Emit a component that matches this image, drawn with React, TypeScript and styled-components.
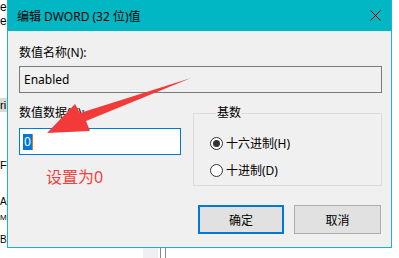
import React from "react"
import styled, { createGlobalStyle } from "styled-components"

const GlobalStyle = createGlobalStyle`
  html, body {
    margin: 0;
    padding: 0;
    background: #ffffff;
  }
  body {
    font-family: "Noto Sans", "Noto Sans CJK SC", sans-serif;
    font-size: 12px;
    color: #000;
  }
`

const Desktop = styled.div`
  position: relative;
  width: 399px;
  height: 258px;
  overflow: hidden;
  background: #ffffff;
`

const BackList = styled.div`
  display: flex;
  flex-direction: column;
  width: 7px;
  overflow: hidden;
  font-family: "Liberation Sans", sans-serif;
`

const BackRow = styled.div<{ $top: number; $size: number; $selected?: boolean }>`
  height: 14px;
  line-height: 14px;
  margin-top: ${({ $top }) => $top}px;
  font-size: ${({ $size }) => $size}px;
  white-space: nowrap;
  background: ${({ $selected }) => ($selected ? "#d9d9d9" : "transparent")};
`

const BottomStrip = styled.div`
  position: absolute;
  left: 143px;
  top: 248px;
  display: flex;
  height: 10px;
`

const StripBox = styled.div<{ $w: number; $bg: string }>`
  width: ${({ $w }) => $w}px;
  background: ${({ $bg }) => $bg};
`

const Window = styled.div`
  position: absolute;
  left: 7px;
  top: 0;
  width: 385px;
  height: 248px;
  box-sizing: border-box;
  border: 1px solid #1db4c2;
  border-top: none;
  background: #f0f0f0;
  display: flex;
  flex-direction: column;
`

const TitleBar = styled.div`
  height: 31px;
  flex-shrink: 0;
  background: #00b7c3;
  display: flex;
  align-items: center;
  justify-content: space-between;
  padding: 0 10px 0 9px;
  font-size: 12px;
  color: #000;
`

const Body = styled.div`
  flex: 1;
  padding: 14px 9px 0 11px;
  display: flex;
  flex-direction: column;
`

const Label = styled.div`
  height: 16px;
  line-height: 16px;
  font-size: 12px;
`

const ReadOnlyField = styled.div`
  margin-top: 5px;
  height: 27px;
  box-sizing: border-box;
  border: 1px solid #7a7a7a;
  background: #f0f0f0;
  display: flex;
  align-items: center;
  padding-left: 4px;
  font-family: "Noto Sans", sans-serif;
  font-size: 12px;
`

const Row = styled.div`
  margin-top: 12px;
  display: grid;
  grid-template-columns: 162px 189px;
  column-gap: 12px;
`

const LeftCol = styled.div`
  display: flex;
  flex-direction: column;
`

const DataInput = styled.div`
  margin-top: 7px;
  height: 27px;
  box-sizing: border-box;
  border: 1px solid #0078d7;
  background: #ffffff;
  display: flex;
  align-items: center;
  padding-left: 3px;
`

const Selection = styled.span`
  background: #0078d7;
  color: #ffffff;
  font-family: "Noto Sans", sans-serif;
  font-size: 12px;
  line-height: 16px;
  padding: 0 1px;
`

const Caret = styled.span`
  width: 1px;
  height: 16px;
  background: #e8731c;
`

const Hint = styled.div`
  margin: 12px 0 0 27px;
  color: #f5403f;
  font-size: 16px;
  line-height: 20px;
`

const Group = styled.fieldset`
  margin: 0;
  padding: 14px 0 0 16px;
  border: 1px solid #dcdcdc;
  height: 81px;
  box-sizing: border-box;
  min-width: 0;
`

const Legend = styled.legend`
  padding: 0 1px;
  margin-left: 6px;
  font-size: 12px;
  line-height: 16px;
`

const RadioRow = styled.div`
  display: flex;
  align-items: center;
  gap: 3px;
  height: 16px;
  margin-bottom: 11px;
`

const RadioCircle = styled.span<{ $checked?: boolean }>`
  width: 13px;
  height: 13px;
  box-sizing: border-box;
  border-radius: 50%;
  border: 1px solid #333333;
  background: #ffffff;
  display: flex;
  align-items: center;
  justify-content: center;

  &::after {
    content: "";
    width: 7px;
    height: 7px;
    border-radius: 50%;
    background: ${({ $checked }) => ($checked ? "#333333" : "transparent")};
  }
`

const ButtonBar = styled.div`
  margin-top: 18px;
  display: flex;
  justify-content: flex-end;
  gap: 10px;
  padding-right: 1px;
`

const Button = styled.div<{ $primary?: boolean }>`
  width: ${({ $primary }) => ($primary ? 86 : 87)}px;
  height: 29px;
  box-sizing: border-box;
  background: #e1e1e1;
  border: ${({ $primary }) => ($primary ? "2px solid #0078d7" : "1px solid #adadad")};
  display: flex;
  align-items: center;
  justify-content: center;
  font-size: 12px;
`

const Overlay = styled.svg`
  position: absolute;
  left: 0;
  top: 0;
  pointer-events: none;
`

const backRows = [
  { top: 0, text: "e", size: 12 },
  { top: 0, text: "e", size: 12 },
  { top: 70, text: "ri", size: 11 },
  { top: 46, text: "F", size: 11 },
  { top: 23, text: "A", size: 10 },
  { top: 2, text: "M", size: 8 },
  { top: 8, text: "B", size: 10 },
]

export default function App() {
  return (
    <>
      <GlobalStyle />
      <Desktop>
        <BackList>
          {backRows.map((r, i) => (
            <BackRow key={i} $top={r.top} $size={r.size} $selected={r.text === "ri"}>
              {r.text}
            </BackRow>
          ))}
        </BackList>
        <BottomStrip>
          <StripBox $w={15} $bg="#f0f0f0" />
          <StripBox $w={2} $bg="#ffffff" />
          <StripBox $w={1} $bg="#888888" />
          <StripBox $w={4} $bg="#ffffff" />
          <StripBox $w={1} $bg="#888888" />
        </BottomStrip>

        <Window>
          <TitleBar>
            <span>编辑 DWORD (32 位)值</span>
            <svg width="11" height="11" viewBox="0 0 11 11">
              <path d="M0.5 0.5 L10.5 10.5 M10.5 0.5 L0.5 10.5" stroke="#000" strokeWidth="1" />
            </svg>
          </TitleBar>
          <Body>
            <Label>数值名称(N):</Label>
            <ReadOnlyField>Enabled</ReadOnlyField>
            <Row>
              <LeftCol>
                <Label>数值数据(V):</Label>
                <DataInput>
                  <Selection>0</Selection>
                  <Caret />
                </DataInput>
                <Hint>设置为0</Hint>
              </LeftCol>
              <Group>
                <Legend>基数</Legend>
                <RadioRow>
                  <RadioCircle $checked />
                  <span>十六进制(H)</span>
                </RadioRow>
                <RadioRow>
                  <RadioCircle />
                  <span>十进制(D)</span>
                </RadioRow>
              </Group>
            </Row>
            <ButtonBar>
              <Button $primary>确定</Button>
              <Button>取消</Button>
            </ButtonBar>
          </Body>
        </Window>

        <Overlay width="399" height="258" viewBox="0 0 399 258">
          <path
            d="M191 78 L86 121 L90 131 L47 133 L75 104 L80 113 Z"
            fill="#f23a3a"
          />
        </Overlay>
      </Desktop>
    </>
  )
}
